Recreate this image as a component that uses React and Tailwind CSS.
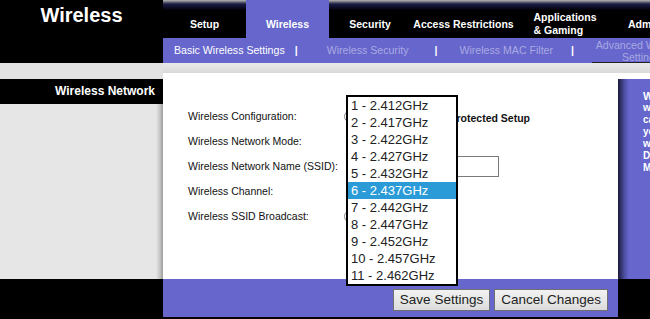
import React from "react";

const channels = [
  "1 - 2.412GHz",
  "2 - 2.417GHz",
  "3 - 2.422GHz",
  "4 - 2.427GHz",
  "5 - 2.432GHz",
  "6 - 2.437GHz",
  "7 - 2.442GHz",
  "8 - 2.447GHz",
  "9 - 2.452GHz",
  "10 - 2.457GHz",
  "11 - 2.462GHz",
];

const Radio = ({ checked }) => (
  <span className="inline-flex w-[13px] h-[13px] rounded-full border border-[#8a8a8a] bg-white items-center justify-center">
    {checked && <span className="w-[5px] h-[5px] rounded-full bg-[#222]" />}
  </span>
);

const Tab = ({ label, width, active, children }) => (
  <div
    className={`${width} h-full flex items-center justify-center pt-[10px] text-white font-bold text-[10.5px] leading-[13px] text-center ${
      active ? "bg-[#6666cc]" : ""
    }`}
  >
    {children || label}
  </div>
);

const Row = ({ label, children }) => (
  <div className="flex items-center h-[25px]">
    <div className="w-[158px] text-[10.5px] text-[#111]">{label}</div>
    {children}
  </div>
);

export default function App() {
  return (
    <div className="relative w-[650px] h-[319px] overflow-hidden bg-black font-['Liberation_Sans',Arial,sans-serif]">
      {/* header */}
      <div className="flex h-[63px]">
        <div className="w-[163px] shrink-0 text-center text-white font-bold text-[20px] leading-[24px] pt-[3px]">
          Wireless
        </div>
        <div className="flex-1 flex flex-col overflow-hidden">
          <div className="h-[38px] flex bg-[linear-gradient(to_bottom,#b8b8b8_0px,#6a6a78_2px,#1c1c44_4px,#0a0a22_8px,#000_10px)]">
            <Tab label="Setup" width="w-[83px] shrink-0" />
            <Tab label="Wireless" width="w-[83px] shrink-0" active />
            <Tab label="Security" width="w-[82px] shrink-0" />
            <Tab label="Access Restrictions" width="w-[105px] shrink-0" />
            <Tab width="w-[98px] shrink-0">
              <span className="text-left">
                Applications
                <br />& Gaming
              </span>
            </Tab>
            <Tab label="Administration" width="w-[102px] shrink-0" />
          </div>
          <div className="h-[25px] bg-[#6666cc] flex items-center pl-[11px] text-[10.6px] whitespace-nowrap">
            <span className="shrink-0 text-white">Basic Wireless Settings</span>
            <span className="shrink-0 ml-[10px] text-white font-bold">|</span>
            <span className="shrink-0 ml-[29px] text-[#a9a9e2]">Wireless Security</span>
            <span className="shrink-0 ml-[26px] text-white font-bold">|</span>
            <span className="shrink-0 ml-[22px] text-[#a9a9e2]">Wireless MAC Filter</span>
            <span className="shrink-0 ml-[18px] text-white font-bold">|</span>
            <span className="ml-[18px] w-[98px] shrink-0 h-full flex flex-col items-center leading-[12px] pt-[1px] text-[#a9a9e2] border-b border-[#222]">
              <span>Advanced Wireless</span>
              <span>Settings</span>
            </span>
          </div>
        </div>
      </div>

      {/* body */}
      <div className="flex h-[256px]">
        <div className="w-[163px] shrink-0 flex flex-col">
          <div className="h-[16px] bg-[#e2e2e2]" />
          <div className="h-[25px] bg-black text-right pr-[8px] text-white font-bold text-[12px] leading-[25px]">
            Wireless Network
          </div>
          <div className="h-[175px] bg-[#e6e6e6] bg-[linear-gradient(to_right,#e6e6e6_156px,#c4c4c4_160px,#9c9c9c_163px)]" />
          <div className="flex-1 bg-black" />
        </div>

        <div className="flex-1 flex flex-col">
          <div className="h-[10px] bg-[linear-gradient(to_bottom,#e9e9e9,#d9d9d9)]" />
          <div className="flex h-[206px]">
            <div className="w-[455px] bg-white pl-[25px] pt-[31px]">
              <Row label="Wireless Configuration:">
                <div className="flex items-center w-[186px] -ml-[2px]">
                  <Radio />
                  <span className="ml-1 text-[10.5px] text-[#111]">Manual</span>
                  <span className="ml-auto flex items-center pt-[4px]">
                    <Radio checked />
                    <span className="ml-1 font-bold text-[10.5px] text-[#111]">
                      Wi-Fi Protected Setup
                    </span>
                  </span>
                </div>
              </Row>
              <Row label="Wireless Network Mode:">
                <div className="w-[100px] h-[18px] border border-[#8a8a8a]" />
              </Row>
              <Row label="Wireless Network Name (SSID):">
                <div className="w-[153px] h-[21px] border border-[#7a7a7a] bg-white" />
              </Row>
              <Row label="Wireless Channel:">
                <div className="w-[100px] h-[18px] border border-[#8a8a8a]" />
              </Row>
              <Row label="Wireless SSID Broadcast:">
                <div className="-ml-[2px] flex items-center">
                  <Radio checked />
                </div>
              </Row>
            </div>
            <div className="w-[32px] flex flex-col">
              <div className="h-[6px] bg-white" />
              <div className="flex-1 overflow-hidden bg-[linear-gradient(to_right,#1a1a38_0px,#33336e_3px,#5252a8_7px,#6666cc_11px)] pl-[25px] pt-[11px] text-white font-bold text-[10px] leading-[12px]">
                <div className="text-[11px]">Wireless</div>
                <div>will</div>
                <div>can</div>
                <div>you</div>
                <div>wireless</div>
                <div>Default</div>
                <div>Mixed</div>
              </div>
            </div>
          </div>
          <div className="flex h-[40px]">
            <div className="w-[455px] h-[38px] bg-[#6666cc] flex justify-end gap-[4px] pr-[10px] pt-[10px]">
              <button className="h-[22px] px-[6px] border border-[#707070] bg-[linear-gradient(to_bottom,#f2f2f2,#dcdcdc)] text-[13.5px] leading-[20px] text-[#222]">
                Save Settings
              </button>
              <button className="h-[22px] px-[6px] border border-[#707070] bg-[linear-gradient(to_bottom,#f2f2f2,#dcdcdc)] text-[13.5px] leading-[20px] text-[#222]">
                Cancel Changes
              </button>
            </div>
            <div className="flex-1 bg-black" />
          </div>
        </div>
      </div>

      {/* open channel dropdown */}
      <div className="absolute left-[346px] top-[95px] w-[112px] border-2 border-black bg-white z-10">
        {channels.map((c, i) => (
          <div
            key={c}
            className={`h-[17px] leading-[17px] pl-[3px] text-[13px] ${
              i === 5 ? "bg-[#2b9bd8] text-white" : "text-[#222]"
            }`}
          >
            {c}
          </div>
        ))}
      </div>
    </div>
  );
}
